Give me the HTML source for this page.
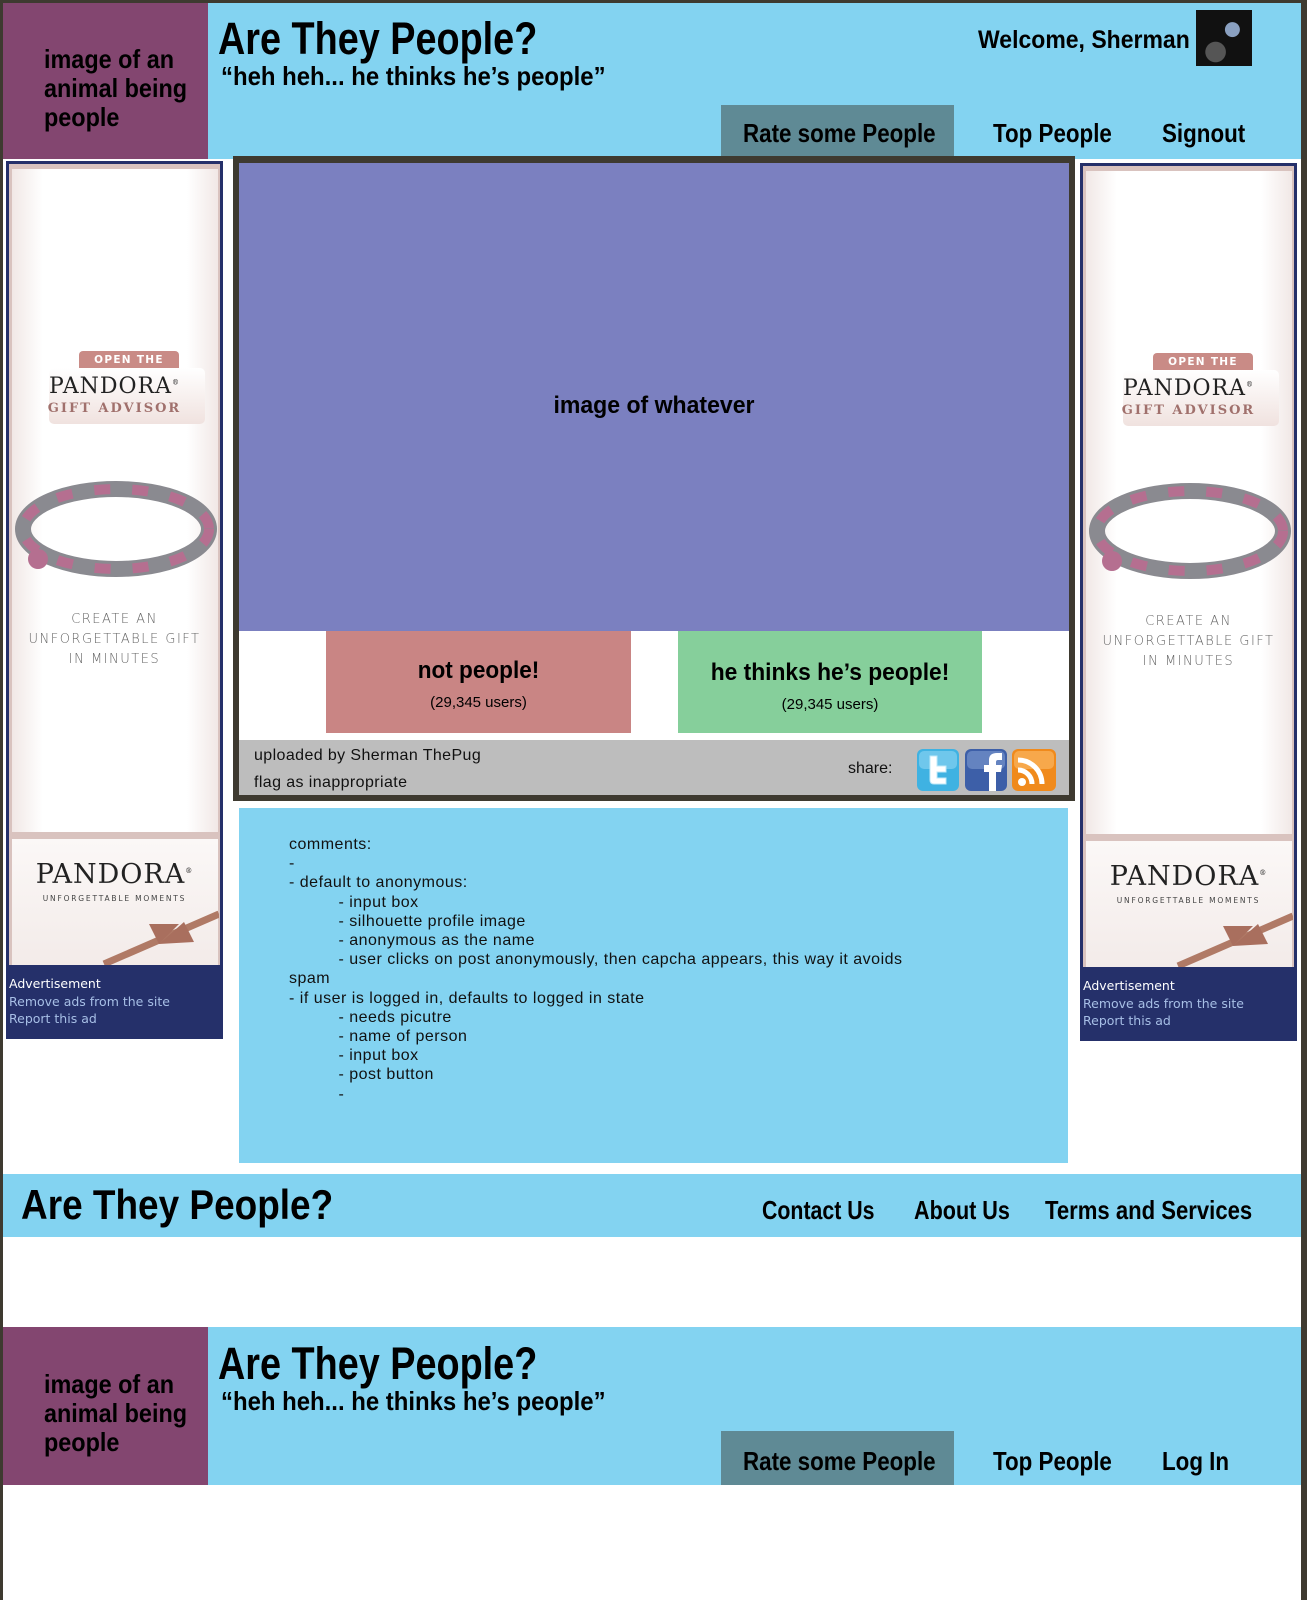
<!DOCTYPE html>
<html><head><meta charset="utf-8">
<style>
*{margin:0;padding:0;box-sizing:border-box}
body{width:1307px;height:1600px;position:relative;background:#fff;overflow:hidden;font-family:"Liberation Sans",sans-serif}
.a{position:absolute}
.f{font-family:"Liberation Sans",sans-serif;font-weight:bold;color:#000;white-space:nowrap;transform-origin:0 0}
.lb{background:#83d3f1}
.pu{background:#834670}
.nav{background:#5f8a95}
.ad{position:absolute;width:217px;height:875px;background:#d9c3bf;border:3px solid #25306a;border-bottom:none}
.ad .w{position:absolute;left:3px;top:5px;width:206px;height:663px;background:linear-gradient(90deg,#f1e8e6,#fff 15%,#fff 85%,#f1e8e6)}
.ad .l{position:absolute;left:3px;top:675px;width:206px;height:126px;background:linear-gradient(180deg,#fbf8f7,#f3ebe9)}
.ad .n{position:absolute;left:-3px;top:801px;width:217px;height:74px;background:#25306a;font-family:"DejaVu Sans",sans-serif;font-size:12.5px;line-height:17.5px;padding:10px 0 0 3px;color:#fff}
.ad .n span{color:#a7bfe6}
.c{position:absolute;left:0;width:211px;text-align:center;white-space:nowrap}
.pd{font-family:"DejaVu Serif","Liberation Serif",serif;color:#222;letter-spacing:1px}
.cr{font-family:"DejaVu Sans",sans-serif;font-size:13px;color:#666;letter-spacing:1.5px;font-weight:300}
.cm{font-size:16px;letter-spacing:0.5px;line-height:19.2px;color:#111;white-space:pre}
.ot{position:absolute;left:70px;top:187px;width:100px;height:18px;background:#c98b86;border-radius:4px 4px 0 0;color:#fff;font-family:"DejaVu Sans",sans-serif;font-weight:bold;font-size:10.5px;letter-spacing:1.3px;text-align:center;line-height:18px;white-space:nowrap}
</style></head><body>
<div class="a" style="left:0;top:0;width:1307px;height:3px;background:#3e3a30"></div>
<div class="a" style="left:0;top:0;width:3px;height:1600px;background:#3e3a30"></div>
<div class="a" style="left:1301px;top:0;width:6px;height:1600px;background:#3e3a30"></div>

<!-- header -->
<div class="a lb" style="left:3px;top:3px;width:1298px;height:156px"></div>
<div class="a pu" style="left:3px;top:3px;width:205px;height:156px"></div>
<div class="a f" style="left:44px;top:45px;font-size:26px;line-height:29px;transform:scaleX(.9)">image of an<br>animal being<br>people</div>
<div class="a f" style="left:218px;top:13px;font-size:45px;transform:scaleX(.84)">Are They People?</div>
<div class="a f" style="left:221px;top:61px;font-size:26px;transform:scaleX(.92)">“heh heh... he thinks he’s people”</div>
<div class="a f" style="left:978px;top:26px;font-size:25px;transform:scaleX(.92)">Welcome, Sherman</div>
<div class="a" style="left:1196px;top:10px;width:56px;height:56px;background:radial-gradient(ellipse at 65% 35%,#8aa0c0 0 14%,transparent 15%),radial-gradient(circle at 35% 75%,#555 0 18%,transparent 19%),#111"></div>
<div class="a nav" style="left:721px;top:105px;width:233px;height:51px"></div>
<div class="a f" style="left:743px;top:118px;font-size:26px;transform:scaleX(.86)">Rate some People</div>
<div class="a f" style="left:993px;top:118px;font-size:26px;transform:scaleX(.86)">Top People</div>
<div class="a f" style="left:1162px;top:118px;font-size:26px;transform:scaleX(.86)">Signout</div>

<!-- ads -->
<div class="ad" style="left:6px;top:161px">
 <div class="w"></div>
 <div class="ot">OPEN THE</div>
 <div class="a" style="left:40px;top:204px;width:156px;height:56px;background:linear-gradient(#fff,#f0e2df);border-radius:5px"></div>
 <div class="c pd" style="top:210px;font-size:22px">PANDORA<sup style="font-size:7px">®</sup></div>
 <div class="c pd" style="top:237px;font-size:13px;color:#a0706c;letter-spacing:2px;font-weight:bold">GIFT ADVISOR</div>
 <svg class="a" style="left:4px;top:300px" width="206" height="130"><ellipse cx="103" cy="65" rx="93" ry="40" fill="none" stroke="#8a8a90" stroke-width="16"/><ellipse cx="103" cy="65" rx="93" ry="40" fill="none" stroke="#b56f90" stroke-width="10" stroke-dasharray="16 22"/><circle cx="25" cy="95" r="10" fill="#b56f90"/></svg>
 <div class="c cr" style="top:446px;line-height:20px">CREATE AN<br>UNFORGETTABLE GIFT<br>IN MINUTES</div>
 <div class="l"></div>
 <div class="c pd" style="top:695px;font-size:27px">PANDORA<sup style="font-size:7px">®</sup></div>
 <div class="c" style="top:730px;font-size:7.5px;color:#444;letter-spacing:1.8px;font-family:'DejaVu Sans',sans-serif">UNFORGETTABLE MOMENTS</div>
 <svg class="a" style="left:90px;top:730px" width="120" height="72"><path d="M5 70 L120 20" stroke="#b07a66" stroke-width="7"/><path d="M60 50 l25 -22 l10 20z M60 50 l-10 -20 l30 0z" fill="#a96f5e"/></svg>
 <div class="n">Advertisement<br><span>Remove ads from the site<br>Report this ad</span></div>
</div>
<div class="ad" style="left:1080px;top:163px">
 <div class="w"></div>
 <div class="ot">OPEN THE</div>
 <div class="a" style="left:40px;top:204px;width:156px;height:56px;background:linear-gradient(#fff,#f0e2df);border-radius:5px"></div>
 <div class="c pd" style="top:210px;font-size:22px">PANDORA<sup style="font-size:7px">®</sup></div>
 <div class="c pd" style="top:237px;font-size:13px;color:#a0706c;letter-spacing:2px;font-weight:bold">GIFT ADVISOR</div>
 <svg class="a" style="left:4px;top:300px" width="206" height="130"><ellipse cx="103" cy="65" rx="93" ry="40" fill="none" stroke="#8a8a90" stroke-width="16"/><ellipse cx="103" cy="65" rx="93" ry="40" fill="none" stroke="#b56f90" stroke-width="10" stroke-dasharray="16 22"/><circle cx="25" cy="95" r="10" fill="#b56f90"/></svg>
 <div class="c cr" style="top:446px;line-height:20px">CREATE AN<br>UNFORGETTABLE GIFT<br>IN MINUTES</div>
 <div class="l"></div>
 <div class="c pd" style="top:695px;font-size:27px">PANDORA<sup style="font-size:7px">®</sup></div>
 <div class="c" style="top:730px;font-size:7.5px;color:#444;letter-spacing:1.8px;font-family:'DejaVu Sans',sans-serif">UNFORGETTABLE MOMENTS</div>
 <svg class="a" style="left:90px;top:730px" width="120" height="72"><path d="M5 70 L120 20" stroke="#b07a66" stroke-width="7"/><path d="M60 50 l25 -22 l10 20z M60 50 l-10 -20 l30 0z" fill="#a96f5e"/></svg>
 <div class="n">Advertisement<br><span>Remove ads from the site<br>Report this ad</span></div>
</div>

<!-- main frame -->
<div class="a" style="left:233px;top:156px;width:842px;height:645px;background:#3e3a30"></div>
<div class="a" style="left:239px;top:163px;width:830px;height:577px;background:#fff"></div>
<div class="a" style="left:239px;top:163px;width:830px;height:468px;background:#7b80c0"></div>
<div class="a f" style="left:239px;top:392px;width:830px;text-align:center;font-size:24px;transform:scaleX(.96);transform-origin:50% 0">image of whatever</div>
<div class="a" style="left:326px;top:631px;width:305px;height:102px;background:#c98584"></div>
<div class="a f" style="left:326px;top:657px;width:305px;text-align:center;font-size:24px;transform:scaleX(.94);transform-origin:50% 0">not people!</div>
<div class="a" style="left:326px;top:694px;width:305px;text-align:center;font-size:15px">(29,345 users)</div>
<div class="a" style="left:678px;top:631px;width:304px;height:102px;background:#86cf9b"></div>
<div class="a f" style="left:678px;top:659px;width:304px;text-align:center;font-size:24px;transform:scaleX(.95);transform-origin:50% 0">he thinks he’s people!</div>
<div class="a" style="left:678px;top:696px;width:304px;text-align:center;font-size:15px">(29,345 users)</div>
<div class="a" style="left:239px;top:740px;width:830px;height:55px;background:#bdbdbd"></div>
<div class="a" style="left:254px;top:742px;font-size:16px;letter-spacing:.4px;line-height:27px;color:#111">uploaded by Sherman ThePug<br>flag as inappropriate</div>
<div class="a" style="left:848px;top:760px;font-size:16px;color:#111">share:</div>
<svg class="a" style="left:916px;top:748px" width="142" height="44">
 <rect x="1" y="1" width="42" height="42" rx="6" fill="#3fb2e2"/><rect x="3" y="3" width="38" height="18" rx="5" fill="#8fd6f3" opacity=".6"/>
 <path d="M14 8v24q0 4 4 4h12v-6h-9v-6h9v-6h-9v-10z" fill="#fff" stroke="#bfe8f8"/>
 <rect x="49" y="1" width="42" height="42" rx="6" fill="#3d5fa8"/><rect x="51" y="3" width="38" height="18" rx="5" fill="#7f9bd0" opacity=".6"/>
 <path d="M73 43V24h-5v-7h5v-5q0-7 8-7h5v7h-4q-2 0-2 2v3h6l-1 7h-5v19z" fill="#fff"/>
 <rect x="96" y="1" width="44" height="42" rx="6" fill="#f08a1c"/><rect x="98" y="3" width="40" height="18" rx="5" fill="#fbbd6b" opacity=".6"/>
 <circle cx="106" cy="34" r="4" fill="#fff"/><path d="M102 22a14 14 0 0 1 14 14M102 12a24 24 0 0 1 24 24" stroke="#fff" stroke-width="5" fill="none"/>
</svg>

<!-- comments -->
<div class="a lb" style="left:239px;top:808px;width:829px;height:355px"></div>
<div class="a cm" style="left:289px;top:835px">comments:
-
- default to anonymous:
          - input box
          - silhouette profile image
          - anonymous as the name
          - user clicks on post anonymously, then capcha appears, this way it avoids
spam
- if user is logged in, defaults to logged in state
          - needs picutre
          - name of person
          - input box
          - post button
          -</div>

<!-- footer -->
<div class="a lb" style="left:3px;top:1174px;width:1298px;height:63px"></div>
<div class="a f" style="left:21px;top:1181px;font-size:42px;transform:scaleX(.88)">Are They People?</div>
<div class="a f" style="left:762px;top:1195px;font-size:26px;transform:scaleX(.82)">Contact Us</div>
<div class="a f" style="left:914px;top:1195px;font-size:26px;transform:scaleX(.83)">About Us</div>
<div class="a f" style="left:1045px;top:1195px;font-size:26px;transform:scaleX(.85)">Terms and Services</div>

<!-- second header -->
<div class="a lb" style="left:3px;top:1327px;width:1298px;height:158px"></div>
<div class="a pu" style="left:3px;top:1327px;width:205px;height:158px"></div>
<div class="a f" style="left:44px;top:1370px;font-size:26px;line-height:29px;transform:scaleX(.9)">image of an<br>animal being<br>people</div>
<div class="a f" style="left:218px;top:1338px;font-size:45px;transform:scaleX(.84)">Are They People?</div>
<div class="a f" style="left:221px;top:1386px;font-size:26px;transform:scaleX(.92)">“heh heh... he thinks he’s people”</div>
<div class="a nav" style="left:721px;top:1431px;width:233px;height:54px"></div>
<div class="a f" style="left:743px;top:1446px;font-size:26px;transform:scaleX(.86)">Rate some People</div>
<div class="a f" style="left:993px;top:1446px;font-size:26px;transform:scaleX(.86)">Top People</div>
<div class="a f" style="left:1162px;top:1446px;font-size:26px;transform:scaleX(.86)">Log In</div>
</body></html>
